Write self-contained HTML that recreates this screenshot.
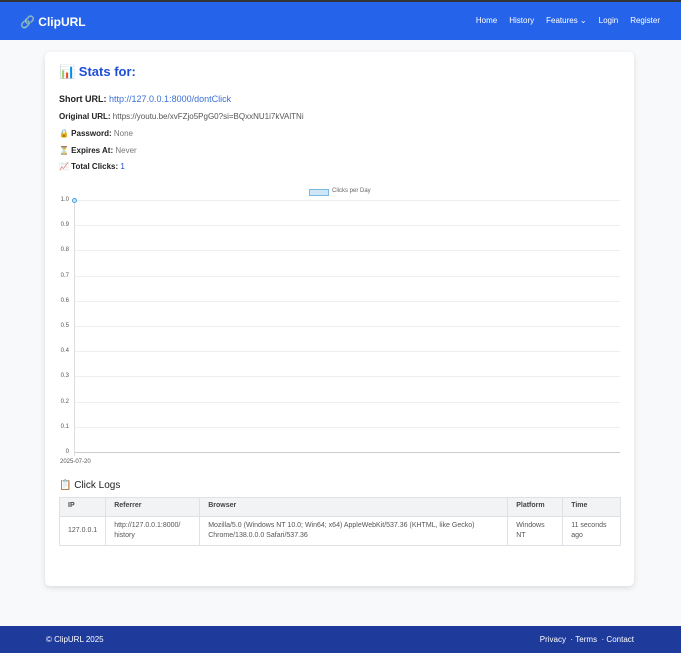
<!DOCTYPE html>
<html><head><meta charset="utf-8"><style>
*{box-sizing:border-box;margin:0;padding:0}
body{width:681px;height:653px;background:#f8f9fb;font-family:"Liberation Sans",sans-serif;position:relative;overflow:hidden;color:#222}
.top{position:absolute;top:0;left:0;width:681px;height:2px;background:#333}
nav{position:absolute;top:2px;left:0;width:681px;height:38px;background:#2563eb;color:#fff}
.logo{position:absolute;left:20px;top:13px;font-weight:bold;font-size:12px}
.links{position:absolute;right:21px;top:14px;font-size:8px;display:flex;gap:12px}
.card{position:absolute;left:45px;top:52px;width:589px;height:534px;background:#fff;border-radius:5px;box-shadow:0 2px 6px rgba(0,0,0,.12)}
.a{position:absolute;font-size:8px;white-space:nowrap}
h2{position:absolute;left:59px;top:64px;font-size:13px;color:#1d4ed8}
.grid{position:absolute;left:74px;width:546px;height:1px;background:#eceef0}
.yl{position:absolute;left:55px;width:14px;text-align:right;font-size:6px;color:#555}
table{position:absolute;left:59px;top:497px;width:562px;border-collapse:collapse;font-size:7px;color:#555}
th,td{border:1px solid #dee2e6;text-align:left;padding:4px 8px;vertical-align:top;font-weight:normal}
th{background:#f1f3f5;font-weight:bold;height:19px;color:#444}
td{height:29px;line-height:10px}
footer{position:absolute;top:626px;left:0;width:681px;height:27px;background:#1e3a9a;color:#fff;font-size:8px}
</style></head><body>
<div class="top"></div>
<nav><div class="logo">🔗 ClipURL</div>
<div class="links"><span>Home</span><span>History</span><span>Features ⌄</span><span>Login</span><span>Register</span></div></nav>
<div class="card"></div>
<h2>📊 Stats for:</h2>
<div class="a" style="left:59px;top:94px;font-size:9px"><b>Short URL:</b> <span style="color:#3b6fd6">http://127.0.0.1:8000/dontClick</span></div>
<div class="a" style="left:59px;top:112px"><b>Original URL:</b> <span style="color:#555">https://youtu.be/xvFZjo5PgG0?si=BQxxNU1i7kVAlTNi</span></div>
<div class="a" style="left:59px;top:129px"><b>🔒 Password:</b> <span style="color:#777">None</span></div>
<div class="a" style="left:59px;top:146px"><b>⏳ Expires At:</b> <span style="color:#777">Never</span></div>
<div class="a" style="left:59px;top:162px"><b>📈 Total Clicks:</b> <span style="color:#1d4ed8">1</span></div>
<div style="position:absolute;left:309px;top:189px;width:20px;height:7px;background:#cfe6f7;border:1px solid #7ab8e6"></div>
<div class="a" style="left:332px;top:188px;font-size:6px;color:#666">Clicks per Day</div>
<div class="grid" style="top:200px"></div><div class="grid" style="top:225px"></div><div class="grid" style="top:250px"></div><div class="grid" style="top:276px"></div><div class="grid" style="top:301px"></div><div class="grid" style="top:326px"></div><div class="grid" style="top:351px"></div><div class="grid" style="top:376px"></div><div class="grid" style="top:402px"></div><div class="grid" style="top:427px"></div><div class="grid" style="top:452px;background:#ccc"></div>
<div style="position:absolute;left:74px;top:198px;width:1px;height:258px;background:#ddd"></div>
<div class="yl" style="top:197px">1.0</div><div class="yl" style="top:222px">0.9</div><div class="yl" style="top:247px">0.8</div><div class="yl" style="top:273px">0.7</div><div class="yl" style="top:298px">0.6</div><div class="yl" style="top:323px">0.5</div><div class="yl" style="top:348px">0.4</div><div class="yl" style="top:373px">0.3</div><div class="yl" style="top:399px">0.2</div><div class="yl" style="top:424px">0.1</div><div class="yl" style="top:449px">0</div>
<div style="position:absolute;left:72px;top:198px;width:5px;height:5px;border-radius:50%;background:#cfe6f7;border:1px solid #4a9fe0"></div>
<div class="a" style="left:60px;top:459px;font-size:6px;color:#555">2025-07-20</div>
<div class="a" style="left:59px;top:480px;font-size:10px">📋 Click Logs</div>
<table><tr><th style="width:45px">IP</th><th style="width:94px">Referrer</th><th style="width:308px">Browser</th><th style="width:55px">Platform</th><th>Time</th></tr>
<tr><td style="vertical-align:middle">127.0.0.1</td><td>http://127.0.0.1:8000/ history</td><td>Mozilla/5.0 (Windows NT 10.0; Win64; x64) AppleWebKit/537.36 (KHTML, like Gecko) Chrome/138.0.0.0 Safari/537.36</td><td>Windows NT</td><td>11 seconds ago</td></tr></table>
<footer><span style="position:absolute;left:46px;top:9px">© ClipURL 2025</span><span style="position:absolute;right:47px;top:9px">Privacy &nbsp;·&nbsp;Terms &nbsp;·&nbsp;Contact</span></footer>
</body></html>
